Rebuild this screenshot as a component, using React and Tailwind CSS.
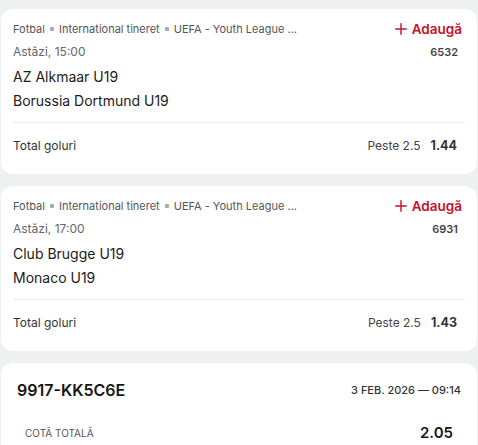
import { Plus } from "lucide-react"

const bets = [
  {
    id: 1,
    path: ["Fotbal", "International tineret", "UEFA - Youth League ..."],
    time: "Astăzi, 15:00",
    code: "6532",
    home: "AZ Alkmaar U19",
    away: "Borussia Dortmund U19",
    market: "Total goluri",
    pick: "Peste 2.5",
    odd: "1.44",
  },
  {
    id: 2,
    path: ["Fotbal", "International tineret", "UEFA - Youth League ..."],
    time: "Astăzi, 17:00",
    code: "6931",
    home: "Club Brugge U19",
    away: "Monaco U19",
    market: "Total goluri",
    pick: "Peste 2.5",
    odd: "1.43",
  },
]

function BetCard({ bet }) {
  return (
    <div className="mx-px rounded-xl bg-white pl-3 pr-3 pt-[11px] pb-4">
      <div className="flex h-[18px] items-center justify-between">
        <p className="flex items-center text-[11px] text-[#555]">
          {bet.path.map((p, i) => (
            <span key={i} className="flex items-center">
              {i > 0 && <span className="mx-[5px] inline-block h-[4px] w-[4px] rounded-[1px] bg-[#aaa]" />}
              {p}
            </span>
          ))}
        </p>
        <button className="mr-[3px] flex items-center gap-[2px] text-[13.5px] font-semibold text-[#c8102e]">
          <Plus size={18} strokeWidth={1.9} />
          Adaugă
        </button>
      </div>

      <div className="mt-[6px] flex h-4 items-center justify-between">
        <p className="text-[12px] text-[#666]">{bet.time}</p>
        <span className="mr-[7px] text-[11px] font-semibold text-[#444]">{bet.code}</span>
      </div>

      <p className="mt-1 flex h-6 items-center text-[14px] text-[#1b1b1b]">{bet.home}</p>
      <p className="flex h-6 items-center text-[14px] text-[#1b1b1b]">{bet.away}</p>

      <div className="mt-[10px] border-t border-[#ececec]" />

      <div className="mt-[11px] flex h-6 items-center justify-between">
        <p className="text-[12px] text-[#333]">{bet.market}</p>
        <div className="mr-2 flex items-center gap-[10px]">
          <span className="text-[12px] text-[#444]">{bet.pick}</span>
          <span className="text-[12.5px] font-bold text-[#333]">{bet.odd}</span>
        </div>
      </div>
    </div>
  )
}

function App() {
  return (
    <div
      className="h-[445px] overflow-hidden bg-[#eef0f2] pt-[9px]"
      style={{ fontFamily: "Inter, 'Noto Sans', sans-serif" }}
    >
      <div className="flex flex-col gap-3">
        {bets.map(b => (
          <BetCard key={b.id} bet={b} />
        ))}

        <div className="mx-px rounded-xl bg-white px-4 pt-[17px] pb-6">
          <div className="flex h-5 items-center justify-between">
            <h2 className="text-[16px] font-semibold text-[#161616]">9917-KK5C6E</h2>
            <span className="text-[11px] font-medium text-[#333]">3 FEB. 2026 — 09:14</span>
          </div>
          <div className="mt-[23px] flex h-5 items-center justify-between pl-2 pr-2">
            <span className="text-[10px] uppercase text-[#555]">Cotă totală</span>
            <span className="text-[15px] font-semibold text-[#161616]">2.05</span>
          </div>
        </div>
      </div>
    </div>
  )
}

export default App
